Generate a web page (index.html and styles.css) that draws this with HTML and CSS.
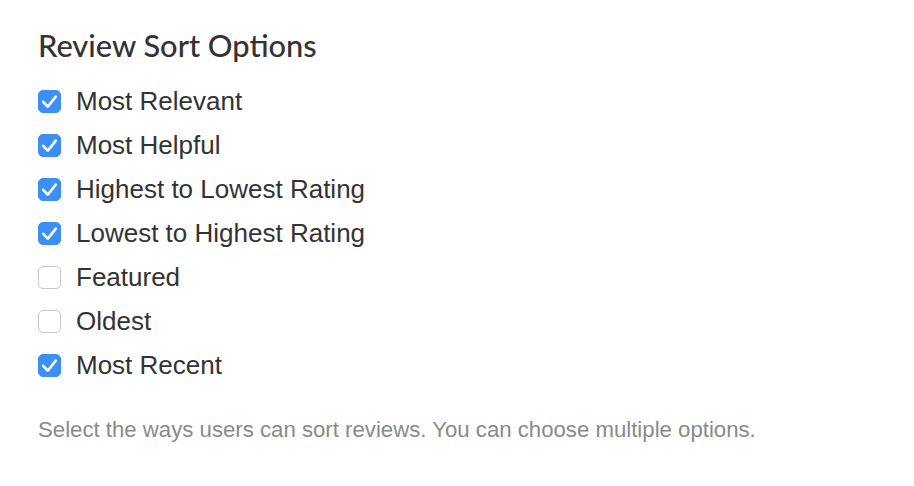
FILE: index.html
```html
<!DOCTYPE html>
<html>
<head>
<meta charset="utf-8">
<link rel="stylesheet" href="styles.css">
</head>
<body>
<div class="panel">
  <h2 class="title">Review Sort Options</h2>
  <ul class="options">
    <li class="option"><span class="box checked"><svg viewBox="0 0 23 23"><path d="M5.2 11.8l4.6 4.8 8-10"/></svg></span><span class="label">Most Relevant</span></li>
    <li class="option"><span class="box checked"><svg viewBox="0 0 23 23"><path d="M5.2 11.8l4.6 4.8 8-10"/></svg></span><span class="label">Most Helpful</span></li>
    <li class="option"><span class="box checked"><svg viewBox="0 0 23 23"><path d="M5.2 11.8l4.6 4.8 8-10"/></svg></span><span class="label">Highest to Lowest Rating</span></li>
    <li class="option"><span class="box checked"><svg viewBox="0 0 23 23"><path d="M5.2 11.8l4.6 4.8 8-10"/></svg></span><span class="label">Lowest to Highest Rating</span></li>
    <li class="option"><span class="box"></span><span class="label">Featured</span></li>
    <li class="option"><span class="box"></span><span class="label">Oldest</span></li>
    <li class="option"><span class="box checked"><svg viewBox="0 0 23 23"><path d="M5.2 11.8l4.6 4.8 8-10"/></svg></span><span class="label">Most Recent</span></li>
  </ul>
  <p class="hint">Select the ways users can sort reviews. You can choose multiple options.</p>
</div>
</body>
</html>
```
FILE: styles.css
```css
html, body {
  margin: 0;
  padding: 0;
  background: #ffffff;
}
.panel {
  padding: 26px 38px;
  font-family: "Liberation Sans", Arial, sans-serif;
}
.title {
  margin: 0 0 13px 0;
  font-family: Lato, "Liberation Sans", sans-serif;
  font-weight: 500;
  font-size: 30.8px;
  line-height: 40px;
  color: #333333;
}
.options {
  list-style: none;
  margin: 0;
  padding: 0;
}
.option {
  display: flex;
  align-items: center;
  gap: 15px;
  height: 44px;
}
.box {
  box-sizing: border-box;
  width: 23px;
  height: 23px;
  border: 1px solid #c8c8c8;
  border-radius: 5px;
  background: #ffffff;
  display: flex;
  align-items: center;
  justify-content: center;
  flex: none;
}
.box.checked {
  background: #3b8ff6;
  border-color: #3b8ff6;
}
.box svg {
  width: 23px;
  height: 23px;
  flex: none;
  fill: none;
  stroke: #ffffff;
  stroke-width: 2.6;
  stroke-linecap: round;
  stroke-linejoin: round;
}
.label {
  font-size: 26px;
  color: #333333;
}
.hint {
  margin: 30px 0 0 0;
  font-size: 22.2px;
  line-height: 25px;
  color: #8a8a8a;
}
```
